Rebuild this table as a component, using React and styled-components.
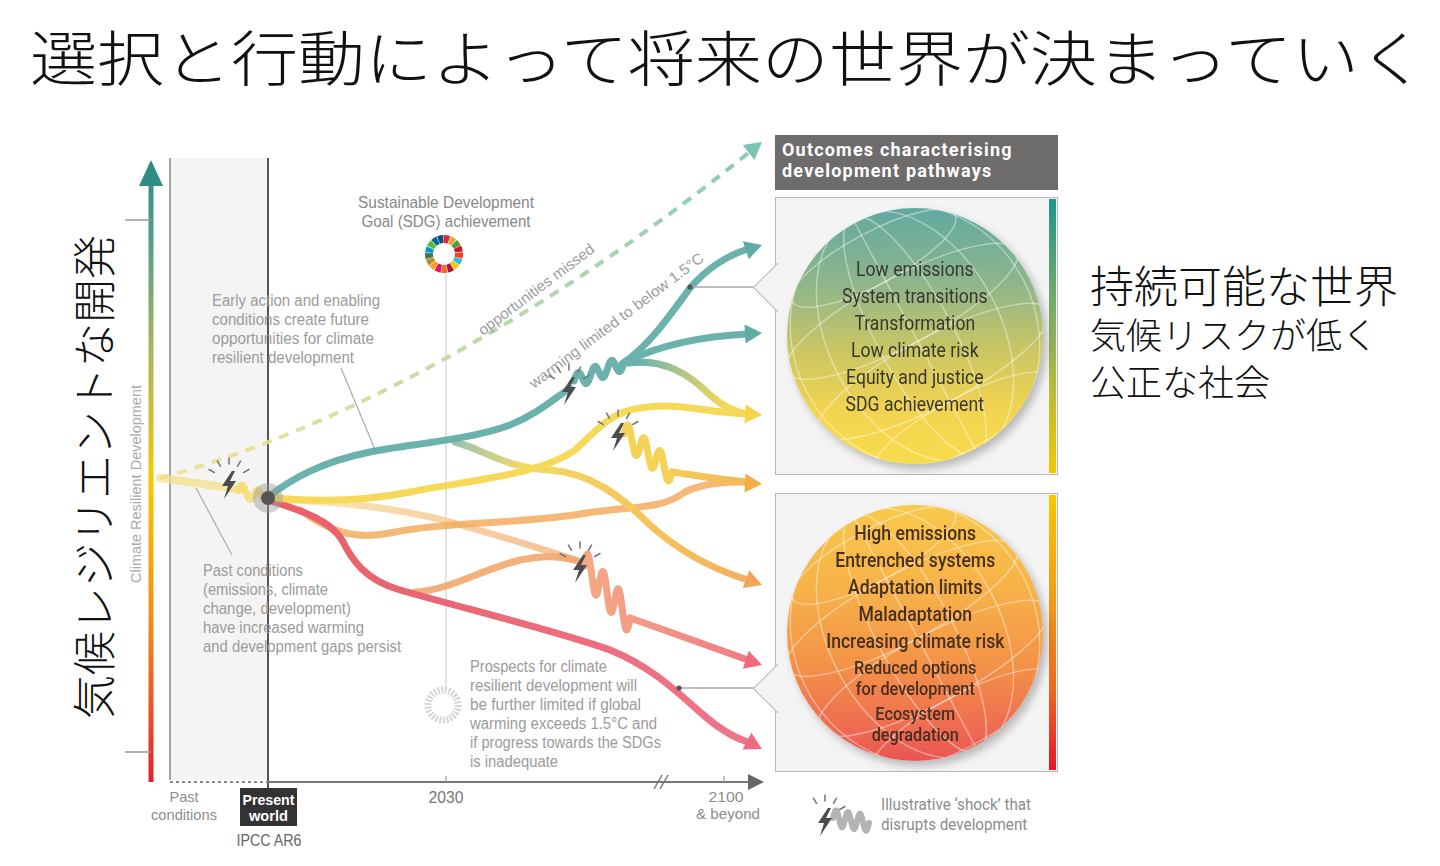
import React from "react";
import styled, { createGlobalStyle } from "styled-components";

const GlobalStyle = createGlobalStyle`
  html, body {
    margin: 0;
    padding: 0;
    background: #fff;
  }
  body {
    font-family: "Noto Sans CJK JP", "Noto Sans", sans-serif;
  }
`;

const Slide = styled.div`
  width: 1440px;
  height: 866px;
  overflow: hidden;
  background: #fff;
  display: flex;
  flex-direction: column;
`;

const Title = styled.h1`
  margin: 0;
  height: 130px;
  padding: 17px 0 0 30px;
  box-sizing: border-box;
  font-family: "Noto Sans CJK JP", sans-serif;
  font-weight: 300;
  font-size: 60px;
  line-height: 76px;
  color: #111;
  white-space: nowrap;
`;

const TitleText = styled.span`
  display: inline-block;
  transform: scaleX(1.117);
  transform-origin: left center;
`;

const Main = styled.div`
  display: flex;
  align-items: flex-start;
  height: 736px;
`;

const AxisLabel = styled.div`
  width: 125px;
  flex-shrink: 0;
  padding: 105px 0 0 68px;
  box-sizing: border-box;
`;

const VerticalText = styled.div`
  writing-mode: vertical-rl;
  text-orientation: sideways;
  transform: rotate(180deg);
  font-family: "Noto Sans CJK JP", sans-serif;
  font-weight: 300;
  font-size: 44px;
  line-height: 48px;
  color: #111;
  white-space: nowrap;
`;

const ChartSvg = styled.svg`
  width: 650px;
  height: 736px;
  flex-shrink: 0;
  display: block;
`;

const OutcomeColumn = styled.div`
  width: 283px;
  flex-shrink: 0;
  display: flex;
  flex-direction: column;
  padding-top: 5px;
`;

const Header = styled.div`
  height: 55px;
  box-sizing: border-box;
  padding: 4px 7px 0;
  background: #6e6b6b;
  color: #fff;
  font-family: Roboto, "Open Sans", sans-serif;
  font-weight: 700;
  font-size: 18px;
  line-height: 21px;
  letter-spacing: 1.2px;
`;

const OutcomeBox = styled.div`
  position: relative;
  margin-top: ${(p) => p.$gap}px;
  height: ${(p) => p.$h}px;
  box-sizing: border-box;
  background: #f4f4f4;
  border: 1.5px solid #b8b8b8;
  display: flex;
  align-items: center;
  padding-left: 11px;

  &::before {
    content: "";
    position: absolute;
    left: -16px;
    top: ${(p) => p.$pointerTop}px;
    width: 34px;
    height: 34px;
    background: #f4f4f4;
    border-left: 1.5px solid #b8b8b8;
    border-bottom: 1.5px solid #b8b8b8;
    transform: rotate(45deg);
  }
`;

const Globe = styled.div`
  position: relative;
  width: 256px;
  height: 256px;
  flex-shrink: 0;
  border-radius: 50%;
  overflow: hidden;
  background: ${(p) => p.$bg};
  box-shadow: 4px 5px 8px rgba(0, 0, 0, 0.25);
  display: flex;
  align-items: center;
  justify-content: center;
`;

const GridSvg = styled.svg`
  position: absolute;
  inset: 0;
  width: 256px;
  height: 256px;
`;

const GlobeText = styled.div`
  position: relative;
  text-align: center;
  white-space: nowrap;
  transform: scaleX(0.88);
  font-family: Roboto, "Open Sans", sans-serif;
  font-size: 20px;
  font-weight: ${(p) => p.$weight};
  color: ${(p) => p.$color};
  margin-top: ${(p) => p.$shift}px;
`;

const GlobeLine = styled.div`
  line-height: 27px;
`;

const GlobePair = styled.div`
  font-size: 18.5px;
  line-height: 21.5px;
  margin: 3px 0;
`;

const ScaleBar = styled.div`
  width: 7px;
  align-self: stretch;
  margin: 1px 1px 1px auto;
  background: ${(p) => p.$bg};
`;

const Legend = styled.div`
  display: flex;
  align-items: center;
  gap: 6px;
  margin-top: 21px;
  padding-left: 36px;
`;

const LegendText = styled.div`
  font-family: Roboto, "Open Sans", sans-serif;
  font-size: 16px;
  line-height: 20px;
  color: #8c8c8c;
  white-space: nowrap;
  transform: scaleX(0.95);
  transform-origin: left center;
`;

const RightText = styled.div`
  padding: 128px 0 0 32px;
  font-family: "Noto Sans CJK JP", sans-serif;
  color: #111;
  white-space: nowrap;
`;

const Lead = styled.div`
  font-size: 44px;
  line-height: 52px;
  font-weight: 300;
`;

const Sub = styled.div`
  font-size: 36px;
  line-height: 47px;
  font-weight: 300;
`;

// helpers for the drawing
const wave = (x0, y0, x1, y1, n, amp) => {
  const pts = [];
  for (let i = 0; i <= 90; i++) {
    const t = i / 90;
    const x = x0 + (x1 - x0) * t;
    const y = y0 + (y1 - y0) * t - amp * Math.sin(t * n * Math.PI * 2);
    pts.push(`${x.toFixed(1)},${y.toFixed(1)}`);
  }
  return "M" + pts.join(" L");
};

const rad = (d) => (d * Math.PI) / 180;

const ringSeg = (cx, cy, r0, r1, a0, a1) => {
  const p = (r, a) => `${(cx + r * Math.cos(rad(a))).toFixed(2)},${(cy + r * Math.sin(rad(a))).toFixed(2)}`;
  return `M${p(r1, a0)} A${r1},${r1} 0 0 1 ${p(r1, a1)} L${p(r0, a1)} A${r0},${r0} 0 0 0 ${p(r0, a0)} Z`;
};

const SDG_COLORS = [
  "#E5243B", "#DDA63A", "#4C9F38", "#C5192D", "#FF3A21", "#26BDE2",
  "#FCC30B", "#A21942", "#FD6925", "#DD1367", "#FD9D24", "#BF8B2E",
  "#3F7E44", "#0A97D9", "#56C02B", "#00689D", "#19486A",
];

const NOTE_FONT = '"Liberation Sans", Arial, sans-serif';

const Arrow = ({ x, y, a, color }) => (
  <polygon points="0,0 -17,-9.5 -17,9.5" fill={color} transform={`translate(${x} ${y}) rotate(${a})`} />
);

const Shock = ({ x, y, s = 1 }) => (
  <g transform={`translate(${x} ${y}) scale(${s})`}>
    {[-150, -120, -90, -60, -30].map((a) => (
      <line
        key={a}
        x1={Math.cos(rad(a)) * 17}
        y1={Math.sin(rad(a)) * 17 - 3}
        x2={Math.cos(rad(a)) * 23}
        y2={Math.sin(rad(a)) * 23 - 3}
        stroke="#7a7a7a"
        strokeWidth="1.6"
        strokeLinecap="round"
      />
    ))}
    <polygon points="3,-13 -7,2 -1,2 -5,15 7,-3 1,-3 6,-13" fill="#4d4d4d" />
  </g>
);

const Note = ({ x, y, lines, step = 19, size = 16, fill = "#9b9b9b", anchor = "start", weight = 400 }) => (
  <g fontFamily={NOTE_FONT} fontSize={size} fontWeight={weight} fill={fill} textAnchor={anchor}>
    {lines.map(([t, w], i) => (
      <text key={t} x={x} y={y + i * step} textLength={w} lengthAdjust="spacingAndGlyphs">
        {t}
      </text>
    ))}
  </g>
);

const Chart = () => (
  <ChartSvg viewBox="125 130 650 736">
    <defs>
      <linearGradient id="axisGrad" x1="0" y1="160" x2="0" y2="782" gradientUnits="userSpaceOnUse">
        <stop offset="0" stopColor="#2b8f86" />
        <stop offset="0.12" stopColor="#4e9c8a" />
        <stop offset="0.3" stopColor="#a8b463" />
        <stop offset="0.52" stopColor="#f6c800" />
        <stop offset="0.75" stopColor="#f08a1c" />
        <stop offset="1" stopColor="#e4202e" />
      </linearGradient>
      <linearGradient id="dashGrad" x1="160" y1="478" x2="755" y2="148" gradientUnits="userSpaceOnUse">
        <stop offset="0" stopColor="#efe38c" />
        <stop offset="0.5" stopColor="#bcd59d" />
        <stop offset="1" stopColor="#7cc3b3" />
      </linearGradient>
      <linearGradient id="tealYellow" x1="640" y1="0" x2="725" y2="0" gradientUnits="userSpaceOnUse">
        <stop offset="0" stopColor="#5eaca6" />
        <stop offset="1" stopColor="#f6d54a" />
      </linearGradient>
      <linearGradient id="lineB" x1="455" y1="0" x2="760" y2="0" gradientUnits="userSpaceOnUse">
        <stop offset="0" stopColor="#8fbcae" />
        <stop offset="0.22" stopColor="#f3d55a" />
        <stop offset="0.6" stopColor="#f6c24a" />
        <stop offset="1" stopColor="#f4a458" />
      </linearGradient>
      <linearGradient id="lineD" x1="268" y1="0" x2="580" y2="0" gradientUnits="userSpaceOnUse">
        <stop offset="0" stopColor="#f8e5a0" />
        <stop offset="1" stopColor="#f2a870" />
      </linearGradient>
      <linearGradient id="pinkGrad" x1="585" y1="0" x2="760" y2="0" gradientUnits="userSpaceOnUse">
        <stop offset="0" stopColor="#f3a37a" />
        <stop offset="1" stopColor="#ee6b7c" />
      </linearGradient>
      <linearGradient id="redGrad" x1="268" y1="0" x2="760" y2="0" gradientUnits="userSpaceOnUse">
        <stop offset="0" stopColor="#e8505c" />
        <stop offset="1" stopColor="#ee6a80" />
      </linearGradient>
      <linearGradient id="yellowOrange" x1="627" y1="0" x2="760" y2="0" gradientUnits="userSpaceOnUse">
        <stop offset="0" stopColor="#f6d34a" />
        <stop offset="1" stopColor="#f4ad49" />
      </linearGradient>
    </defs>

    {/* past period */}
    <rect x="170" y="158" width="98" height="622" fill="#f4f4f4" />
    <line x1="170" y1="158" x2="170" y2="780" stroke="#8a8a8a" strokeWidth="1.5" />
    <line x1="268" y1="158" x2="268" y2="790" stroke="#555" strokeWidth="2" />

    {/* vertical axis */}
    <line x1="151" y1="182" x2="151" y2="782" stroke="url(#axisGrad)" strokeWidth="5" />
    <polygon points="151,160 139,186 163,186" fill="#2e8d84" />
    <line x1="122" y1="220" x2="151" y2="220" stroke="#9a9a9a" strokeWidth="1.5" />
    <line x1="122" y1="752" x2="151" y2="752" stroke="#9a9a9a" strokeWidth="1.5" />
    <text
      x="141"
      y="484"
      transform="rotate(-90 141 484)"
      textAnchor="middle"
      fontFamily={NOTE_FONT}
      fontSize="15"
      fill="#aaa"
      textLength="198"
      lengthAdjust="spacingAndGlyphs"
    >
      Climate Resilient Development
    </text>

    {/* horizontal axis */}
    <line x1="170" y1="782" x2="268" y2="782" stroke="#888" strokeWidth="2" strokeDasharray="3 3" />
    <line x1="268" y1="782" x2="752" y2="782" stroke="#777" strokeWidth="2" />
    <polygon points="764,782 748,774 748,790" fill="#666" />
    <line x1="654" y1="789" x2="662" y2="775" stroke="#777" strokeWidth="1.5" />
    <line x1="660" y1="789" x2="668" y2="775" stroke="#777" strokeWidth="1.5" />
    <line x1="446" y1="776" x2="446" y2="782" stroke="#999" strokeWidth="1.2" />
    <line x1="724" y1="776" x2="724" y2="782" stroke="#999" strokeWidth="1.2" />

    <Note x={184} y={802} anchor="middle" step={18} size={15} fill="#8d8d8d" lines={[["Past", 29], ["conditions", 66]]} />
    <rect x="240" y="788" width="57" height="38" fill="#333" />
    <Note
      x={268.5}
      y={805}
      anchor="middle"
      step={16}
      size={14}
      weight={700}
      fill="#fff"
      lines={[["Present", 52], ["world", 39]]}
    />
    <Note x={269} y={846} anchor="middle" fill="#666" size={16} lines={[["IPCC AR6", 65]]} />
    <Note x={446} y={803} anchor="middle" fill="#777" size={17} lines={[["2030", 35]]} />
    <Note x={726} y={802} anchor="middle" size={15} fill="#8d8d8d" lines={[["2100", 35]]} />
    <Note x={760} y={819} anchor="end" size={15} fill="#8d8d8d" lines={[["& beyond", 64]]} />

    {/* SDG marker */}
    <line x1="446" y1="275" x2="446" y2="688" stroke="#d2d2d2" strokeWidth="1.2" />
    <Note
      x={446}
      y={208}
      anchor="middle"
      fill="#888"
      lines={[["Sustainable Development", 176], ["Goal (SDG) achievement", 169]]}
    />
    {SDG_COLORS.map((c, i) => {
      const step = 360 / 17;
      const a0 = -90 + i * step;
      return <path key={c + i} d={ringSeg(444, 254, 11, 19, a0, a0 + step - 2)} fill={c} />;
    })}
    <circle cx="443" cy="705" r="15" fill="none" stroke="#d6d6d6" strokeWidth="7" strokeDasharray="2 1.6" />

    {/* missed opportunities */}
    <path
      d="M160,478 C330,432 540,322 752,150"
      fill="none"
      stroke="url(#dashGrad)"
      strokeWidth="4"
      strokeDasharray="10 8"
      opacity="0.9"
    />
    <Arrow x={762} y={142} a={-38} color="#7cc3b3" />
    <text
      transform="translate(483 336) rotate(-37)"
      fontFamily={NOTE_FONT}
      fontSize="15"
      fill="#9d9d9d"
      textLength="141"
      lengthAdjust="spacingAndGlyphs"
    >
      opportunities missed
    </text>
    <text
      transform="translate(534 389) rotate(-37)"
      fontFamily={NOTE_FONT}
      fontSize="15"
      fill="#9d9d9d"
      textLength="214"
      lengthAdjust="spacingAndGlyphs"
    >
      warming limited to below 1.5°C
    </text>

    {/* annotations */}
    <Note
      x={212}
      y={306}
      lines={[
        ["Early action and enabling", 168],
        ["conditions create future", 157],
        ["opportunities for climate", 162],
        ["resilient development", 142],
      ]}
    />
    <line x1="341" y1="368" x2="376" y2="452" stroke="#aaa" strokeWidth="1.2" />
    <Note
      x={203}
      y={576}
      lines={[
        ["Past conditions", 100],
        ["(emissions, climate", 125],
        ["change, development)", 148],
        ["have increased warming", 161],
        ["and development gaps persist", 198],
      ]}
    />
    <line x1="196" y1="488" x2="232" y2="555" stroke="#aaa" strokeWidth="1.2" />
    <Note
      x={470}
      y={672}
      lines={[
        ["Prospects for climate", 137],
        ["resilient development will", 167],
        ["be further limited if global", 171],
        ["warming exceeds 1.5°C and", 187],
        ["if progress towards the SDGs", 191],
        ["is inadequate", 88],
      ]}
    />

    {/* pathways */}
    <g fill="none" strokeWidth="7" strokeLinecap="round" strokeLinejoin="round" opacity="0.92">
      <path d="M160,478 C190,482 220,486 240,490" stroke="#f6de80" opacity="0.75" strokeWidth="8" />
      <path d={wave(238, 490, 262, 497, 1.5, 6)} stroke="#f6d860" opacity="0.8" />

      <path d="M268,500 C330,500 400,508 450,522 C500,536 540,548 575,560" stroke="url(#lineD)" opacity="0.8" />
      <path
        d="M300,510 C330,532 355,540 390,533 C440,522 520,524 580,514 C640,505 660,510 685,492 C705,482 730,482 748,482"
        stroke="#f3a550"
        opacity="0.85"
      />
      <path d="M415,592 C450,590 480,570 520,560 C545,555 560,556 578,561" stroke="#f2a060" opacity="0.9" />
      <path
        d="M268,500 C300,510 330,520 342,540 C352,560 365,580 400,590 C470,610 560,632 610,650 C650,666 675,690 700,712 C720,730 735,738 748,742"
        stroke="url(#redGrad)"
      />
      <path d={wave(584, 566, 630, 618, 3, 16)} stroke="url(#pinkGrad)" />
      <path d="M630,618 C670,632 720,650 748,660" stroke="url(#pinkGrad)" />
      <path
        d="M455,442 C485,450 505,468 550,470 C590,473 620,495 650,525 C680,552 715,570 748,580"
        stroke="url(#lineB)"
      />
      <path
        d="M268,497 C320,503 370,500 410,492 C470,480 540,475 575,450 C595,432 610,412 640,408 C680,402 700,412 748,414"
        stroke="#f7d64c"
      />
      <path d={wave(624, 434, 672, 472, 3, 12)} stroke="#f6cf4a" />
      <path d="M672,472 C700,476 720,480 748,482" stroke="url(#yellowOrange)" />
      <path d="M628,363 C665,358 690,375 710,395 C725,408 738,413 748,414" stroke="url(#tealYellow)" />
      <path d="M625,362 C660,345 705,336 748,334" stroke="#5eaca6" />
      <path
        d="M268,497 C290,480 320,462 370,452 C410,444 470,440 510,425 C535,415 550,402 570,388"
        stroke="#5eaca6"
      />
      <path d={wave(574, 381, 624, 363, 3, 7)} stroke="#5eaca6" />
      <path d="M622,364 C650,345 670,315 690,288 C710,265 732,254 748,249" stroke="#5eaca6" />
    </g>

    <Arrow x={762} y={245} a={-18} color="#5eaca6" />
    <Arrow x={762} y={333} a={-3} color="#5eaca6" />
    <Arrow x={762} y={415} a={4} color="#f6d54a" />
    <Arrow x={762} y={484} a={3} color="#f4ad49" />
    <Arrow x={762} y={585} a={20} color="#f4a458" />
    <Arrow x={762} y={665} a={18} color="#ee6b7c" />
    <Arrow x={762} y={749} a={28} color="#ee6a80" />

    {/* links to the outcome boxes */}
    <line x1="690" y1="287" x2="760" y2="287" stroke="#a8a8a8" strokeWidth="1.5" />
    <circle cx="690" cy="287" r="2.6" fill="#555" />
    <line x1="679" y1="688" x2="760" y2="688" stroke="#a8a8a8" strokeWidth="1.5" />
    <circle cx="679" cy="688" r="2.6" fill="#555" />

    {/* present point and shocks */}
    <circle cx="268" cy="498" r="15" fill="#9a9a9a" opacity="0.45" />
    <circle cx="268" cy="498" r="7" fill="#555" />
    <Shock x={229} y={484} />
    <Shock x={569} y={390} />
    <Shock x={618} y={436} />
    <Shock x={580} y={568} />
  </ChartSvg>
);

const GlobeGrid = () => (
  <GridSvg viewBox="0 0 256 256">
    <g fill="none" stroke="#fff" strokeOpacity="0.42" strokeWidth="1.4" transform="rotate(-28 128 128)">
      <ellipse cx="128" cy="128" rx="38" ry="134" />
      <ellipse cx="128" cy="128" rx="86" ry="134" />
      <ellipse cx="128" cy="128" rx="122" ry="134" />
      <line x1="128" y1="-10" x2="128" y2="266" />
      <ellipse cx="128" cy="40" rx="92" ry="26" />
      <ellipse cx="128" cy="100" rx="130" ry="34" />
      <ellipse cx="128" cy="168" rx="130" ry="34" />
      <ellipse cx="128" cy="228" rx="100" ry="26" />
    </g>
  </GridSvg>
);

const POSITIVE = [
  "Low emissions",
  "System transitions",
  "Transformation",
  "Low climate risk",
  "Equity and justice",
  "SDG achievement",
];

const NEGATIVE = [
  ["High emissions"],
  ["Entrenched systems"],
  ["Adaptation limits"],
  ["Maladaptation"],
  ["Increasing climate risk"],
  ["Reduced options", "for development"],
  ["Ecosystem", "degradation"],
];

const LegendIcon = () => (
  <svg width="64" height="44" viewBox="0 0 64 44">
    <path d={wave(22, 25, 58, 30, 3, 8)} fill="none" stroke="#b3b3b3" strokeWidth="6" strokeLinecap="round" />
    <Shock x={14} y={28} />
  </svg>
);

export default function App() {
  return (
    <Slide>
      <GlobalStyle />
      <Title>
        <TitleText>選択と行動によって将来の世界が決まっていく</TitleText>
      </Title>
      <Main>
        <AxisLabel>
          <VerticalText>気候レジリエントな開発</VerticalText>
        </AxisLabel>
        <Chart />
        <OutcomeColumn>
          <Header>
            Outcomes characterising
            <br />
            development pathways
          </Header>
          <OutcomeBox $gap={7} $h={278} $pointerTop={72}>
            <Globe $bg="linear-gradient(180deg, #62a9a0 0%, #8fb68a 30%, #c9c664 55%, #f1d350 78%, #f9dc4c 100%)">
              <GlobeGrid />
              <GlobeText $weight={400} $color="#38372f" $shift={2}>
                {POSITIVE.map((t) => (
                  <GlobeLine key={t}>{t}</GlobeLine>
                ))}
              </GlobeText>
            </Globe>
            <ScaleBar $bg="linear-gradient(180deg, #1f958a 0%, #8fb35e 50%, #f2c800 100%)" />
          </OutcomeBox>
          <OutcomeBox $gap={18} $h={279} $pointerTop={177}>
            <Globe $bg="linear-gradient(180deg, #f9c94c 0%, #f6b049 35%, #f39347 62%, #ee6a52 88%, #ea5552 100%)">
              <GlobeGrid />
              <GlobeText $weight={500} $color="#47301f" $shift={4}>
                {NEGATIVE.map((l) =>
                  l.length > 1 ? (
                    <GlobePair key={l[0]}>
                      {l.map((t) => (
                        <div key={t}>{t}</div>
                      ))}
                    </GlobePair>
                  ) : (
                    <GlobeLine key={l[0]}>{l[0]}</GlobeLine>
                  )
                )}
              </GlobeText>
            </Globe>
            <ScaleBar $bg="linear-gradient(180deg, #f7c600 0%, #f19a1a 40%, #ec6a1e 70%, #e2172b 100%)" />
          </OutcomeBox>
          <Legend>
            <LegendIcon />
            <LegendText>
              Illustrative ‘shock’ that
              <br />
              disrupts development
            </LegendText>
          </Legend>
        </OutcomeColumn>
        <RightText>
          <Lead>持続可能な世界</Lead>
          <Sub>気候リスクが低く</Sub>
          <Sub>公正な社会</Sub>
        </RightText>
      </Main>
    </Slide>
  );
}
